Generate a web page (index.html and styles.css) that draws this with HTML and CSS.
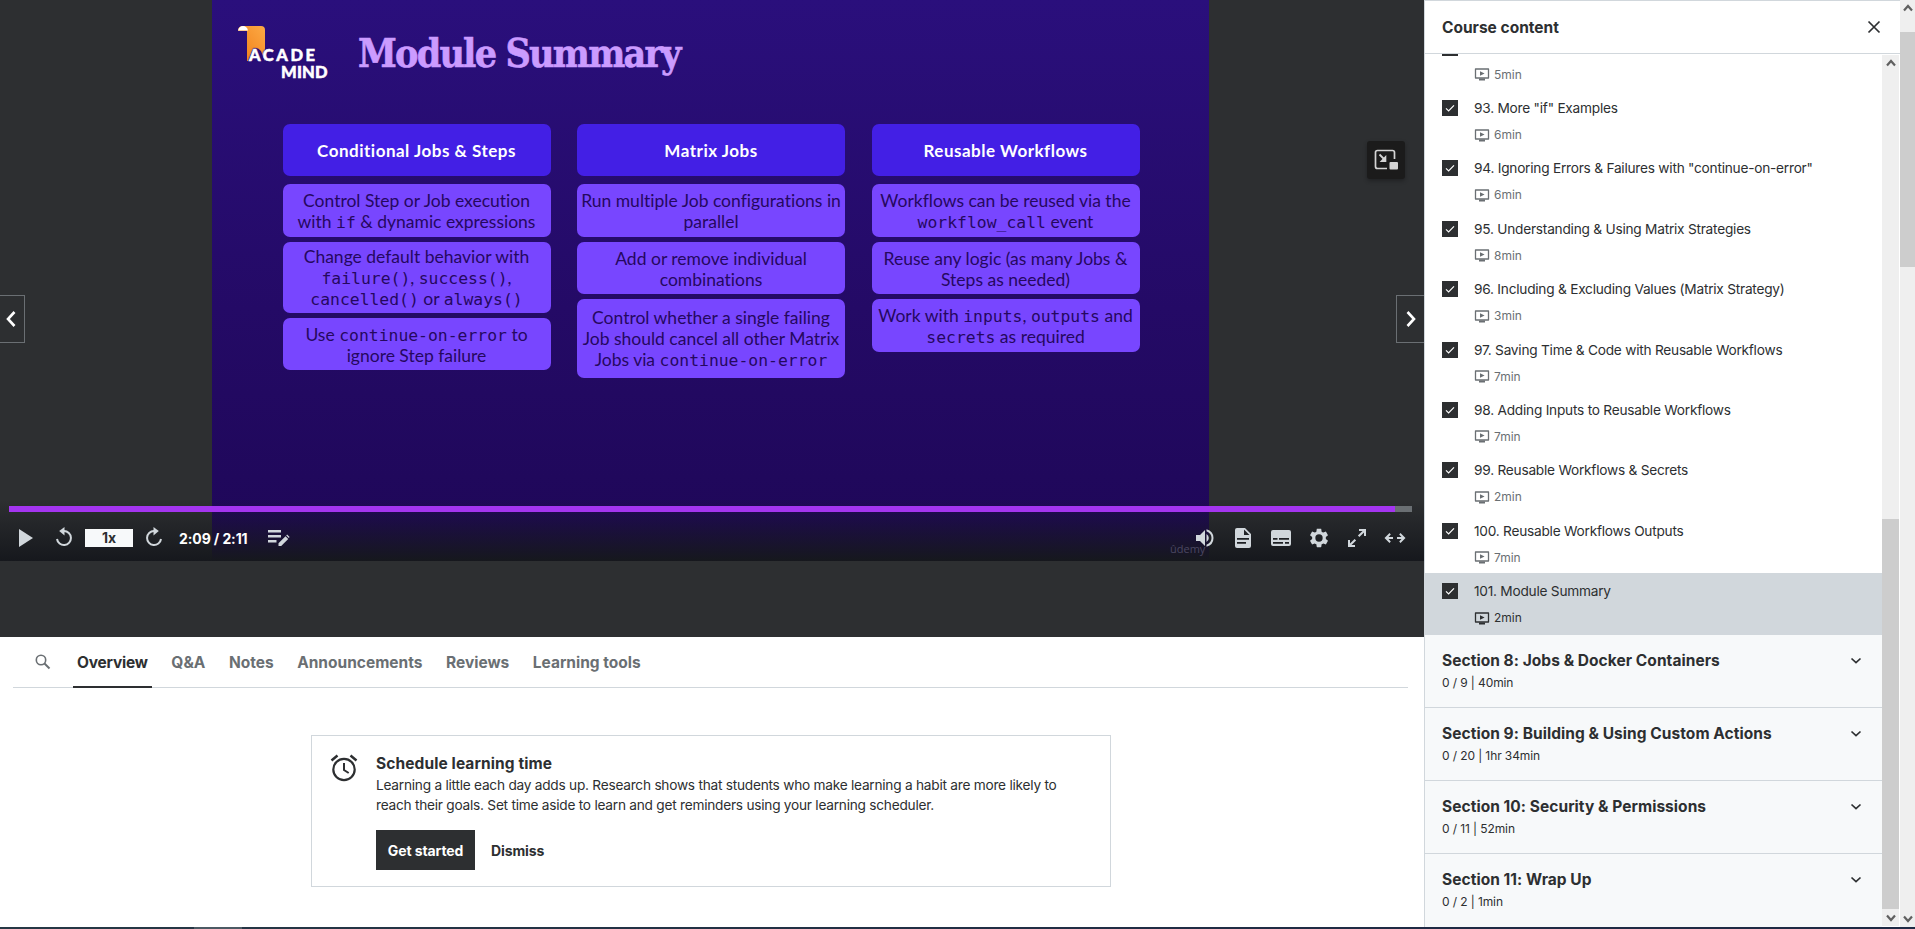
FILE: index.html
```
<!DOCTYPE html>
<html lang="en">
<head>
<meta charset="utf-8">
<title>Module Summary</title>
<link rel="stylesheet" href="styles.css">
</head>
<body>
<svg class="defs" width="0" height="0">
  <defs>
    <symbol id="video" viewBox="0 0 16 13"><path d="M1.500 1h13v9h-13z" fill="none" stroke="currentColor" stroke-width="1.300" stroke-linejoin="round"/><path d="M6 3.200v4.600l4.600-2.300zM5 10.500h6v2H5z" fill="currentColor"/></symbol>
    <symbol id="check" viewBox="0 0 16 16"><path d="M4 8.400l2.600 2.500L12 5.300" fill="none" stroke="#fff" stroke-width="1.200"/></symbol>
    <symbol id="chev" viewBox="0 0 12 8"><path d="M1.500 1.500L6 5.700l4.500-4.200" fill="none" stroke="#2d2f31" stroke-width="1.700"/></symbol>
  </defs>
</svg>
<div class="page">
  <main class="main">
    <section class="player">
      <div class="slide">
        <header class="slide-head">
          <div class="logo">
            <svg class="ribbon" width="28" height="36" viewBox="0 0 28 36"><defs><linearGradient id="rb" x1="0" y1="1" x2="1" y2="0"><stop offset="0" stop-color="#f07c16"/><stop offset="1" stop-color="#fcaa45"/></linearGradient></defs><path d="M5 0h18q4 0 4 4v31l-4-10q-5-6-9 0l-4 10H9V5H0q0-5 5-5z" fill="url(#rb)"/><path d="M0 4.500Q1 0 5 0q4 0 5 4.500z" fill="#fff"/></svg>
            <span class="logo-a">ACADE</span><span class="logo-b">MIND</span>
          </div>
          <h1 class="slide-title">Module Summary</h1>
        </header>
        <div class="cols">
          <div class="col">
            <div class="col-head">Conditional Jobs &amp; Steps</div>
            <div class="card">Control Step or Job execution<br>with <code>if</code> &amp; dynamic expressions</div>
            <div class="card tall">Change default behavior with<br><code>failure()</code>, <code>success()</code>,<br><code>cancelled()</code> or <code>always()</code></div>
            <div class="card">Use <code>continue-on-error</code> to<br>ignore Step failure</div>
          </div>
          <div class="col">
            <div class="col-head">Matrix Jobs</div>
            <div class="card">Run multiple Job configurations in<br>parallel</div>
            <div class="card">Add or remove individual<br>combinations</div>
            <div class="card taller">Control whether a single failing<br>Job should cancel all other Matrix<br>Jobs via <code>continue-on-error</code></div>
          </div>
          <div class="col">
            <div class="col-head">Reusable Workflows</div>
            <div class="card">Workflows can be reused via the<br><code>workflow_call</code> event</div>
            <div class="card">Reuse any logic (as many Jobs &amp;<br>Steps as needed)</div>
            <div class="card">Work with <code>inputs</code>, <code>outputs</code> and<br><code>secrets</code> as required</div>
          </div>
        </div>
      </div>
      <button class="nav prev"><svg width="12" height="18" viewBox="0 0 12 18"><path d="M9.500 2L3 9l6.500 7" fill="none" stroke="#fff" stroke-width="2.600"/></svg></button>
      <button class="nav next"><svg width="12" height="18" viewBox="0 0 12 18"><path d="M2.500 2L9 9l-6.500 7" fill="none" stroke="#fff" stroke-width="2.600"/></svg></button>
      <button class="pip"><svg width="24" height="22" viewBox="0 0 24 22"><path d="M20.500 10V3.500q0-2-2-2h-15q-2 0-2 2v14q0 2 2 2H13" fill="none" stroke="#d4d4d4" stroke-width="1.700"/><path d="M5.500 5.500l5 5" stroke="#d4d4d4" stroke-width="1.800"/><path d="M12.300 6v7H5.600z" fill="#d4d4d4"/><rect x="15.500" y="13" width="8.500" height="7.500" rx="1" fill="#d4d4d4"/></svg></button>
      <div class="controls">
        <span class="watermark">ûdemy</span>
        <div class="progress"><div class="progress-done"></div></div>
        <div class="bar">
          <svg class="i-play" width="14" height="18" viewBox="0 0 14 18"><path d="M0 0l14 9-14 9z"/></svg>
          <svg class="i-back" width="16" height="20" viewBox="0 0 16 20"><path d="M1 12a7 7 0 1 0 7-8" fill="none" stroke="#d1d7dc" stroke-width="2"/><path d="M3.200 4L8.500 0v8.500z"/></svg>
          <span class="rate">1x</span>
          <svg class="i-fwd" width="16" height="20" viewBox="0 0 16 20"><path d="M15 12a7 7 0 1 1-7-8" fill="none" stroke="#d1d7dc" stroke-width="2"/><path d="M12.800 4L7.500 0v8.500z"/></svg>
          <span class="time">2:09 / 2:11</span>
          <svg class="i-note" width="22" height="18" viewBox="0 0 22 18"><path d="M0 1h13v2.500H0zM0 6h13v2.500H0zM0 11h8.500v2.500H0zM10.500 14.200l7-7 2.700 2.700-7 7h-2.700zM18.200 6.500l.9-.9 2.500 2.500-.8.900z"/></svg>
          <span class="grow"></span>
          <svg class="ic" width="20" height="20" viewBox="0 0 20 20"><path d="M1 7v6h4l5 5V2L5 7zM11.500 6v8q2.300-1.300 2.300-4t-2.300-4zM11.500 1.200v2q5 2 5 6.800t-5 6.800v2q7-2 7-8.800t-7-8.800z"/></svg>
          <svg class="ic" width="20" height="20" viewBox="0 0 20 20"><path fill-rule="evenodd" d="M4 0h8l6 6v12q0 2-2 2H4q-2 0-2-2V2q0-2 2-2zm7 1.500V7h5.500zM4 10v1.700h12V10zm0 4v1.700h9V14z"/></svg>
          <svg class="ic" width="20" height="20" viewBox="0 0 20 20"><path fill-rule="evenodd" d="M2 2h16q2 0 2 2v12q0 2-2 2H2q-2 0-2-2V4q0-2 2-2zm0 8v1.700h4.500V10zm6 0v1.700h10V10zM2 14v1.700h10V14zm12 0v1.700h4V14z"/></svg>
          <svg class="ic wide" width="22" height="22" viewBox="0 0 24 24"><path d="M19.430 12.980c.04-.32.070-.64.070-.98s-.03-.66-.07-.98l2.110-1.650c.19-.15.240-.42.120-.64l-2-3.460c-.12-.22-.39-.3-.61-.22l-2.490 1c-.52-.4-1.080-.73-1.690-.98l-.38-2.650C14.460 2.180 14.250 2 14 2h-4c-.25 0-.46.180-.49.420l-.38 2.650c-.61.250-1.170.590-1.690.98l-2.490-1c-.23-.09-.49 0-.61.220l-2 3.460c-.13.220-.07.490.12.640l2.110 1.650c-.04.320-.07.650-.07.980s.03.660.070.980l-2.110 1.650c-.19.150-.24.420-.12.640l2 3.460c.12.220.39.300.61.220l2.490-1c.52.400 1.080.730 1.690.980l.38 2.650c.03.240.24.420.49.420h4c.25 0 .46-.18.490-.42l.38-2.650c.61-.25 1.170-.59 1.690-.98l2.490 1c.23.090.49 0 .61-.22l2-3.460c.12-.22.070-.49-.12-.64l-2.110-1.650zM12 16a4 4 0 1 1 0-8 4 4 0 0 1 0 8z"/></svg>
          <svg class="ic" width="20" height="20" viewBox="0 0 20 20"><path d="M12 1h7v7h-2V4.500l-4.600 4.600-1.500-1.500L15.500 3H12zM8 19H1v-7h2v3.500l4.600-4.600 1.500 1.500L4.500 17H8z"/></svg>
          <svg class="ic wide" width="22" height="20" viewBox="0 0 22 20"><path d="M4.500 9H9v2H4.500l2.300 2.500L5.500 15 .5 10l5-5 1.300 1.500zM17.500 9H13v2h4.500l-2.300 2.500 1.300 1.500 5-5-5-5-1.300 1.500z"/></svg>
        </div>
      </div>
    </section>
    <nav class="tabs">
      <svg class="search" width="16" height="16" viewBox="0 0 16 16"><circle cx="6" cy="6" r="4.700" fill="none" stroke="#6a6f73" stroke-width="1.600"/><path d="M9.500 9.500l5 5" stroke="#6a6f73" stroke-width="2"/></svg>
      <a class="tab active">Overview</a><a class="tab">Q&amp;A</a><a class="tab">Notes</a><a class="tab">Announcements</a><a class="tab">Reviews</a><a class="tab">Learning tools</a>
    </nav>
    <section class="sched">
      <svg class="alarm" width="28" height="28" viewBox="0 0 28 28" fill="none" stroke="#2d2f31"><circle cx="14" cy="15.500" r="10.700" stroke-width="2.200"/><path d="M14 9v7l4.700 3" stroke-width="2"/><path d="M1.500 6.500l6-5M26.500 6.500l-6-5" stroke-width="2.500"/></svg>
      <div class="sched-body">
        <h2 class="sched-title">Schedule learning time</h2>
        <p class="sched-text">Learning a little each day adds up. Research shows that students who make learning a habit are more likely to<br>reach their goals. Set time aside to learn and get reminders using your learning scheduler.</p>
        <div class="sched-actions"><button class="primary">Get started</button><button class="ghost">Dismiss</button></div>
      </div>
    </section>
  </main>
  <aside class="side">
    <header class="side-head"><span>Course content</span><svg width="14" height="14" viewBox="0 0 14 14"><path d="M1.500 1.500l11 11M12.500 1.500l-11 11" stroke="#2d2f31" stroke-width="1.700"/></svg></header>
    <div class="side-body">
      <div class="list">
        <div class="item first"><svg class="cb"><use href="#check"/></svg><div><p class="name"></p><p class="min"><svg class="vid"><use href="#video"/></svg>5min</p></div></div>
        <div class="item"><svg class="cb"><use href="#check"/></svg><div><p class="name">93. More "if" Examples</p><p class="min"><svg class="vid"><use href="#video"/></svg>6min</p></div></div>
        <div class="item"><svg class="cb"><use href="#check"/></svg><div><p class="name">94. Ignoring Errors &amp; Failures with "continue-on-error"</p><p class="min"><svg class="vid"><use href="#video"/></svg>6min</p></div></div>
        <div class="item"><svg class="cb"><use href="#check"/></svg><div><p class="name">95. Understanding &amp; Using Matrix Strategies</p><p class="min"><svg class="vid"><use href="#video"/></svg>8min</p></div></div>
        <div class="item"><svg class="cb"><use href="#check"/></svg><div><p class="name">96. Including &amp; Excluding Values (Matrix Strategy)</p><p class="min"><svg class="vid"><use href="#video"/></svg>3min</p></div></div>
        <div class="item"><svg class="cb"><use href="#check"/></svg><div><p class="name">97. Saving Time &amp; Code with Reusable Workflows</p><p class="min"><svg class="vid"><use href="#video"/></svg>7min</p></div></div>
        <div class="item"><svg class="cb"><use href="#check"/></svg><div><p class="name">98. Adding Inputs to Reusable Workflows</p><p class="min"><svg class="vid"><use href="#video"/></svg>7min</p></div></div>
        <div class="item"><svg class="cb"><use href="#check"/></svg><div><p class="name">99. Reusable Workflows &amp; Secrets</p><p class="min"><svg class="vid"><use href="#video"/></svg>2min</p></div></div>
        <div class="item"><svg class="cb"><use href="#check"/></svg><div><p class="name">100. Reusable Workflows Outputs</p><p class="min"><svg class="vid"><use href="#video"/></svg>7min</p></div></div>
        <div class="item current"><svg class="cb"><use href="#check"/></svg><div><p class="name">101. Module Summary</p><p class="min"><svg class="vid"><use href="#video"/></svg>2min</p></div></div>
        <div class="sec"><div><h3>Section 8: Jobs &amp; Docker Containers</h3><p>0 / 9 | 40min</p></div><svg class="chev"><use href="#chev"/></svg></div>
        <div class="sec"><div><h3>Section 9: Building &amp; Using Custom Actions</h3><p>0 / 20 | 1hr 34min</p></div><svg class="chev"><use href="#chev"/></svg></div>
        <div class="sec"><div><h3>Section 10: Security &amp; Permissions</h3><p>0 / 11 | 52min</p></div><svg class="chev"><use href="#chev"/></svg></div>
        <div class="sec"><div><h3>Section 11: Wrap Up</h3><p>0 / 2 | 1min</p></div><svg class="chev"><use href="#chev"/></svg></div>
      </div>
      <div class="sb inner"><svg width="10" height="8" viewBox="0 0 10 8"><path d="M1 6.500l4-4.500 4 4.500"/></svg><div class="thumb"></div><svg width="10" height="8" viewBox="0 0 10 8"><path d="M1 1.500L5 6l4-4.500"/></svg></div>
    </div>
  </aside>
  <div class="sb outer"><svg width="10" height="8" viewBox="0 0 10 8"><path d="M1 6.500l4-4.500 4 4.500"/></svg><div class="thumb"></div><svg width="10" height="8" viewBox="0 0 10 8"><path d="M1 1.500L5 6l4-4.500"/></svg></div>
</div>
<div class="edge"><div class="edge-tab"></div></div>
</body>
</html>
```
FILE: styles.css
```
* { box-sizing: border-box; margin: 0; padding: 0; }
body { width: 1915px; height: 929px; overflow: hidden; background: #fff; color: #2d2f31; font-family: Inter, "Liberation Sans", sans-serif; font-size: 14px; }
button { border: 0; background: none; font: inherit; color: inherit; letter-spacing: inherit; }
.defs { position: absolute; }
.page { display: flex; height: 927px; }
.edge { height: 2px; padding-left: 194px; background: linear-gradient(90deg, #263845, #1f2a44 75%); }
.edge-tab { width: 48px; height: 2px; background: #4c5a64; }
.main { width: 1424px; }

.player { position: relative; height: 637px; background: #2d2f31; }
.slide { width: 997px; height: 561px; margin-left: 212px; background: linear-gradient(#2a0f7c, #240a66 55%, #1e0757); }
.slide-head { display: flex; height: 124px; padding-left: 26px; }
.logo { position: relative; width: 120px; height: 90px; color: #fff; font: 900 16.500px/16px Lato, sans-serif; -webkit-text-stroke: .5px #fff; }
.ribbon { position: absolute; left: 0; top: 26px; }
.logo-a { position: absolute; left: 11px; top: 47px; letter-spacing: 2.600px; text-shadow: 0 0 2px #2a0f7c, 0 -1px 1px #2a0f7c; }
.logo-b { position: absolute; left: 43px; top: 64px; letter-spacing: .2px; }
.slide-title { padding-top: 29px; font: bold 39px/48px "DejaVu Serif Condensed", "DejaVu Serif", serif; font-stretch: condensed; color: #cb9bff; letter-spacing: -1.800px; white-space: nowrap; -webkit-text-stroke: .6px #cb9bff; }
.cols { display: flex; gap: 26.500px; padding-left: 70.500px; }
.col { display: flex; flex-direction: column; width: 268px; gap: 5px; text-align: center; white-space: nowrap; }
.col-head { height: 52px; margin-bottom: 3px; border-radius: 7px; background: #431fe5; color: #fff; font: 700 17px/53px Lato, sans-serif; letter-spacing: .5px; }
.card { display: flow-root; height: 52.500px; padding-top: 6px; border-radius: 7px; background: #7846ff; color: #26085f; font: 400 17.500px/21px Lato, sans-serif; font-variant-ligatures: none; }
.card.tall { height: 71px; padding-top: 4px; }
.card.taller { height: 78.500px; padding-top: 8px; }
.card code { font: 16.400px/10px "DejaVu Sans Mono", monospace; }

.nav { position: absolute; top: 295px; height: 48px; border: 1px solid #6a6f73; display: flex; align-items: center; }
.prev { left: -1px; width: 26px; padding-left: 5px; }
.next { right: 0; width: 28px; border-right: 0; padding-left: 8px; }
.pip { position: absolute; left: 1367px; top: 141px; width: 38px; height: 38px; border-radius: 3px; background: #1b1b1b; display: flex; align-items: center; justify-content: center; box-shadow: 0 2px 4px rgba(0,0,0,.3); }

.controls { position: absolute; left: 0; right: 0; bottom: 76px; height: 61px; background: linear-gradient(rgba(22,24,29,0), #16181d); }
.watermark { position: absolute; left: 1170px; top: 42px; font: 11px/14px "Open Sans", sans-serif; color: #4b4762; }
.progress { margin: 6px 12px 0 9px; height: 6px; background: #6a6f73; }
.progress-done { width: 98.790%; height: 6px; background: #a435f0; }
.bar { display: flex; align-items: center; height: 52px; padding: 0 19px; color: #fff; }
.bar svg { fill: #d1d7dc; flex: none; }
.i-back { margin-left: 23px; margin-top: -2px; }
.rate { width: 48px; height: 18px; margin-left: 13px; background: #f7f9fa; color: #2d2f31; font-weight: 700; line-height: 18px; text-align: center; }
.i-fwd { margin-left: 13px; margin-top: -2px; }
.time { width: 70px; margin-left: 17px; font-weight: 700; white-space: nowrap; letter-spacing: -.1px; }
.i-note { margin-left: 19px; }
.grow { flex: 1; }
.ic { margin-left: 18px; }
.ic.wide { margin: 0 -1px 0 17px; }

.tabs { display: flex; align-items: stretch; height: 51px; margin: 0 16px 0 13px; padding-left: 22px; border-bottom: 1px solid #d1d7dc; }
.search { margin-top: 17px; }
.tab { padding: 0 4px; margin-left: 12px; font: 700 15.500px/51px Inter, sans-serif; letter-spacing: 0; color: #6a6f73; }
.tab + .tab { margin-left: 15.500px; }
.tab.active { margin-left: 22px; height: 51px; color: #2d2f31; letter-spacing: -.2px; border-bottom: 2px solid #2d2f31; }

.sched { display: flex; width: 800px; height: 152px; margin: 47px 0 0 311px; padding: 18px; border: 1px solid #d1d7dc; }
.alarm { flex: none; margin-right: 18px; }
.sched-title { font-size: 15.500px; line-height: 19px; letter-spacing: .1px; }
.sched-text { margin-top: 2px; font-size: 13.700px; line-height: 20px; letter-spacing: -.250px; white-space: nowrap; }
.sched-actions { display: flex; gap: 16px; margin-top: 15px; font-weight: 700; letter-spacing: -.4px; }
.primary { width: 99px; height: 40px; background: #2d2f31; color: #fff; }
.sched-actions button { letter-spacing: -.1px; }

.side { width: 476px; border-left: 1px solid #d1d7dc; }
.side-head { display: flex; align-items: center; justify-content: space-between; height: 54px; padding: 0 19px 0 17px; border: solid #d1d7dc; border-width: 1px 0; font: 700 15.500px Inter, sans-serif; }
.side-body { display: flex; height: 873px; }
.list { width: 457px; height: 873px; overflow: hidden; display: flex; flex-direction: column; }
.item { flex: none; display: flex; height: 60.400px; padding: 10px 0 0 17px; gap: 16px; }
.item.first { margin-top: -24.400px; }
.item.current { height: 62px; background: #d1d7dc; }
.cb { width: 16px; height: 16px; background: #2d2f31; flex: none; }
.name { height: 17px; font-size: 13.700px; line-height: 17px; letter-spacing: -.240px; white-space: nowrap; }
.min { display: flex; align-items: center; gap: 4px; margin-top: 9px; font-size: 12px; line-height: 18px; color: #6a6f73; }
.current .min { color: #2d2f31; }
.vid { width: 16px; height: 13px; }
.sec { flex: none; display: flex; justify-content: space-between; height: 73px; padding: 16px 20px 0 17px; background: #f7f9fa; border-bottom: 1px solid #d1d7dc; }
.sec h3 { font-size: 15.500px; line-height: 20px; letter-spacing: .05px; }
.sec p { font-size: 12px; line-height: 16px; margin-top: 4px; letter-spacing: -.1px; }
.sec:last-child { height: 75px; border: 0; }
.chev { width: 12px; height: 8px; margin-top: 6px; }
.sb { display: flex; flex-direction: column; align-items: center; background: #efefef; }
.sb svg { flex: none; fill: none; stroke: #606060; stroke-width: 2.200; }
.thumb { width: 100%; background: #cdcdcd; margin-bottom: auto; }
.inner { width: 17px; margin-top: 1px; height: 871px; padding: 4px 0; }
.inner .thumb { margin-top: 452px; height: 390px; }
.outer { width: 15px; padding: 4px 0; }
.outer .thumb { margin-top: 20px; height: 235px; }
```
